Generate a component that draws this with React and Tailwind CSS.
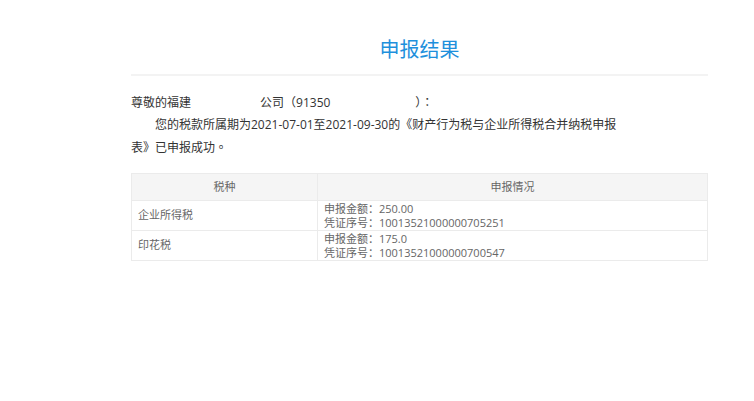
export default function App() {
  const font = { fontFamily: '"Open Sans", "Noto Sans CJK SC", sans-serif' };
  const P = ({ children }) => (
    <span style={{ fontFamily: '"Noto Sans CJK TC", sans-serif' }}>{children}</span>
  );
  return (
    <div className="w-[754px] h-[401px] bg-white" style={font}>
      <div className="w-[577px] ml-[131px] pt-[36px]">
        <div className="text-center text-[20px] leading-[26px] text-[#1e90dc]" style={{ fontFamily: '"Noto Sans CJK SC", sans-serif' }}>申报结果</div>
        <div className="mt-[12px] h-[2px] bg-[#f3f3f3]"></div>
        <div className="mt-[15px] text-[12px] leading-[22px] text-[#333]">
          <div>
            尊敬的福建<span className="inline-block w-[69px]"></span>公司<P>（</P>91350<span className="inline-block w-[85px]"></span><P>）：</P>
          </div>
          <div className="indent-[24px]">
            您的税款所属期为2021-07-01至2021-09-30的《财产行为税与企业所得税合并纳税申报
            <br />
            表》已申报成功<P>。</P>
          </div>
        </div>
        <table className="mt-[14px] w-[577px] border-collapse text-[11px] text-[#666]">
          <thead>
            <tr className="bg-[#f5f5f5]">
              <th className="w-[186px] h-[27px] border border-[#ebebeb] font-normal text-center">税种</th>
              <th className="h-[27px] border border-[#ebebeb] font-normal text-center">申报情况</th>
            </tr>
          </thead>
          <tbody>
            <tr>
              <td className="h-[30px] border border-[#ebebeb] px-[6px] py-0">企业所得税</td>
              <td className="h-[30px] border border-[#ebebeb] px-[6px] py-0 leading-[14px]">
                <div>申报金额：250.00</div>
                <div>凭证序号：10013521000000705251</div>
              </td>
            </tr>
            <tr>
              <td className="h-[30px] border border-[#ebebeb] px-[6px] py-0">印花税</td>
              <td className="h-[30px] border border-[#ebebeb] px-[6px] py-0 leading-[14px]">
                <div>申报金额：175.0</div>
                <div>凭证序号：10013521000000700547</div>
              </td>
            </tr>
          </tbody>
        </table>
      </div>
    </div>
  );
}
